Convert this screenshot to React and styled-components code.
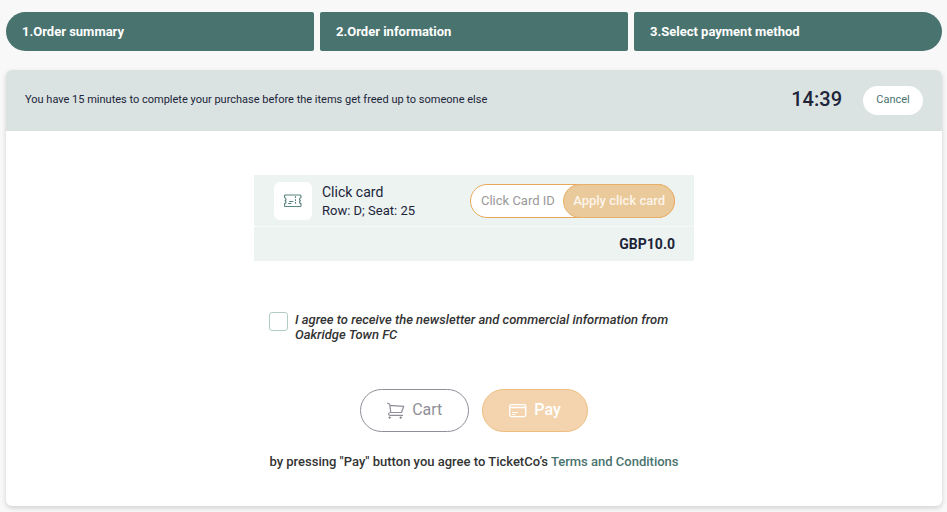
import React, { useState } from "react";
import styled, { createGlobalStyle, ThemeProvider } from "styled-components";

const theme = {
  green: "#49736e",
  banner: "#dae3e1",
  panel: "#edf3f1",
  ink: "#20243a",
  orange: "#e8a95c",
};

const GlobalStyle = createGlobalStyle`
  *, *::before, *::after { box-sizing: border-box; }
  body {
    margin: 0;
    background: #f8f8f8;
    color: #20243a;
    font-family: Roboto, "Liberation Sans", sans-serif;
    font-size: 13px;
  }
  button, input { font-family: inherit; }
`;

const Page = styled.div`
  padding: 12px 5px 6px 6px;
`;

const Steps = styled.ol`
  display: grid;
  grid-template-columns: repeat(3, 1fr);
  gap: 6px;
  margin: 0 0 19px;
  padding: 0;
  list-style: none;
`;

const Step = styled.li`
  padding: 12px 16px;
  border-radius: 2px;
  background: ${({ theme }) => theme.green};
  color: #fff;
  font-size: 13px;
  line-height: 15px;
  font-weight: 700;

  &:first-child { border-radius: 20px 2px 2px 20px; }
  &:last-child { border-radius: 2px 20px 20px 2px; }
`;

const Card = styled.main`
  border-radius: 6px;
  background: #fff;
  box-shadow: 0 2px 5px rgba(0, 0, 0, 0.16);
`;

const Banner = styled.header`
  display: flex;
  align-items: center;
  padding: 16px 19px;
  border-radius: 6px 6px 0 0;
  background: ${({ theme }) => theme.banner};
`;

const Notice = styled.p`
  flex: 1;
  margin: 0;
  padding-bottom: 2px;
  font-size: 11px;
  line-height: 15px;
`;

const Timer = styled.time`
  margin-right: 21px;
  padding-bottom: 2px;
  font-size: 20px;
  line-height: 23px;
  font-weight: 500;
`;

const CancelButton = styled.button`
  min-width: 60px;
  height: 29px;
  padding: 0 12px 2px;
  border: 0;
  border-radius: 15px;
  background: #fff;
  color: ${({ theme }) => theme.green};
  font-size: 11px;
`;

const Checkout = styled.form`
  display: flex;
  flex-direction: column;
  align-items: center;
  padding: 44px 20px 36px;
`;

const Order = styled.section`
  width: 100%;
  max-width: 440px;
  margin-bottom: 51px;
  background: ${({ theme }) => theme.panel};
`;

const Item = styled.div`
  display: flex;
  align-items: center;
  padding: 7px 19px 6px 20px;
  border-bottom: 1px dotted #fff;
`;

const IconTile = styled.span`
  display: grid;
  place-items: center;
  width: 38px;
  height: 38px;
  margin-right: 10px;
  border-radius: 6px;
  background: #fff;
`;

const ItemText = styled.div`
  flex: 1;
`;

const ItemName = styled.div`
  font-size: 14px;
  line-height: 19px;
`;

const ItemSeat = styled.div`
  font-size: 13px;
  line-height: 18px;
`;

const CardField = styled.div`
  display: flex;
  width: 205px;
  height: 34px;
  border: 1px solid ${({ theme }) => theme.orange};
  border-radius: 17px;
  background: #fff;
`;

const CardInput = styled.input`
  flex: 1;
  min-width: 0;
  padding: 0 0 2px 10px;
  border: 0;
  background: transparent;
  color: ${({ theme }) => theme.ink};
  font-size: 13px;
  outline: none;

  &::placeholder { color: #999; opacity: 1; }
`;

const ApplyButton = styled.button`
  margin: -1px;
  padding: 0 9px 2px;
  border: 1px solid #e8af6b;
  border-radius: 17px;
  background: #eac99b;
  color: #fcf5ea;
  font-size: 13px;
  font-weight: 500;
  white-space: nowrap;
`;

const Total = styled.div`
  padding: 9px 19px;
  font-size: 14px;
  line-height: 16px;
  font-weight: 700;
  text-align: right;
`;

const Consent = styled.label`
  display: flex;
  align-items: flex-start;
  width: 100%;
  max-width: 410px;
  margin-bottom: 47px;
  color: #333;
  font-size: 13px;
  line-height: 15px;
  font-weight: 500;
  font-style: italic;
`;

const Checkbox = styled.input`
  appearance: none;
  flex: none;
  width: 19px;
  height: 19px;
  margin: 0 7px 0 0;
  border: 1px solid #b3cdc6;
  border-radius: 3px;
  background: #fff;

  &:checked { background: ${({ theme }) => theme.green}; }
`;

const Actions = styled.div`
  display: flex;
  gap: 13px;
  margin-bottom: 22px;
`;

const ActionButton = styled.button`
  display: flex;
  align-items: center;
  gap: 7px;
  height: 43px;
  padding: 0 26px;
  border: 1px solid ${({ $primary }) => ($primary ? "#eebe80" : "#8f8f99")};
  border-radius: 22px;
  background: ${({ $primary }) => ($primary ? "#f3d4ae" : "#fff")};
  color: ${({ $primary }) => ($primary ? "#fff" : "#8f8f99")};
  font-size: 16px;
  font-weight: ${({ $primary }) => ($primary ? 500 : 400)};
`;

const ActionLabel = styled.span`
  padding-bottom: 2px;
`;

const Terms = styled.p`
  margin: 0;
  color: #333;
  font-size: 13px;
  line-height: 16px;
  font-weight: 500;
`;

const TermsLink = styled.a`
  color: ${({ theme }) => theme.green};
  text-decoration: none;
`;

const TicketIcon = () => (
  <svg width="18" height="14" viewBox="0 0 18 14" fill="none" stroke="#5b8580" strokeLinecap="round" strokeLinejoin="round" aria-hidden="true">
    <path d="M1.500 1h14.500q1 0 1 1v1.500q-1.500.7-1.500 1.700t.9 1.500q-.9.500-.9 1.500t1.500 1.700v1.600q0 1-1 1H1.500q-1 0-1-1V9.900Q2 9.200 2 8.200T1.100 6.700Q2 6.200 2 5.200T.5 3.500V2q0-1 1-1z" strokeWidth="1.200" />
    <path d="M11.500 2.500v1M11.500 5.500v1M11.500 8.200v1" strokeWidth="1.100" />
    <path d="M5.500 7.500H9M4.500 9.500H7" />
  </svg>
);

const CartIcon = () => (
  <svg width="18" height="17" viewBox="0 0 18 17" fill="none" stroke="currentColor" strokeLinecap="round" strokeLinejoin="round" aria-hidden="true">
    <path d="M.5 1.200 2.600 2l1.200 8.500h10.700l2.200-6.200L3 3.300" strokeWidth="1.200" />
    <path d="M3.800 10.500q-2.300.2-2.300 1.600 0 1.200 1.500 1.200h12.500" strokeWidth="1.200" />
    <circle cx="2.700" cy="15.600" r=".8" fill="currentColor" />
    <circle cx="13.700" cy="15.600" r=".8" fill="currentColor" />
  </svg>
);

const PayIcon = () => (
  <svg width="18" height="15" viewBox="0 0 18 15" fill="none" stroke="currentColor" strokeLinecap="round" aria-hidden="true">
    <rect x=".7" y="1.600" width="16" height="12" rx="1.500" strokeWidth="1.300" />
    <path d="M1 4.500h15.500" strokeWidth="1.300" />
    <path d="M3.500 9.500H8.500M3.500 11.500H6" strokeWidth="1.100" />
  </svg>
);

const steps = ["Order summary", "Order information", "Select payment method"];

export default function App() {
  const [cardId, setCardId] = useState("");
  const [agreed, setAgreed] = useState(false);

  return (
    <ThemeProvider theme={theme}>
      <GlobalStyle />
      <Page>
        <Steps>
          {steps.map((label, i) => (
            <Step key={label}>{`${i + 1}.${label}`}</Step>
          ))}
        </Steps>
        <Card>
          <Banner>
            <Notice>You have 15 minutes to complete your purchase before the items get freed up to someone else</Notice>
            <Timer>14:39</Timer>
            <CancelButton type="button">Cancel</CancelButton>
          </Banner>
          <Checkout onSubmit={(e) => e.preventDefault()}>
            <Order>
              <Item>
                <IconTile><TicketIcon /></IconTile>
                <ItemText>
                  <ItemName>Click card</ItemName>
                  <ItemSeat>Row: D; Seat: 25</ItemSeat>
                </ItemText>
                <CardField>
                  <CardInput
                    aria-label="Click Card ID"
                    placeholder="Click Card ID"
                    value={cardId}
                    onChange={(e) => setCardId(e.target.value)}
                  />
                  <ApplyButton type="button">Apply click card</ApplyButton>
                </CardField>
              </Item>
              <Total>GBP10.0</Total>
            </Order>
            <Consent>
              <Checkbox type="checkbox" checked={agreed} onChange={(e) => setAgreed(e.target.checked)} />
              <span>I agree to receive the newsletter and commercial information from Oakridge Town FC</span>
            </Consent>
            <Actions>
              <ActionButton type="button">
                <CartIcon />
                <ActionLabel>Cart</ActionLabel>
              </ActionButton>
              <ActionButton type="submit" $primary>
                <PayIcon />
                <ActionLabel>Pay</ActionLabel>
              </ActionButton>
            </Actions>
            <Terms>
              by pressing "Pay" button you agree to TicketCo’s <TermsLink href="#terms">Terms and Conditions</TermsLink>
            </Terms>
          </Checkout>
        </Card>
      </Page>
    </ThemeProvider>
  );
}
